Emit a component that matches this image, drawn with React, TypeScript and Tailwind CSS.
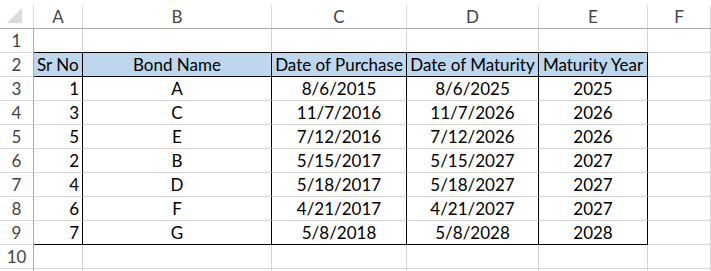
import React from "react";

const letters = ["A", "B", "C", "D", "E", "F"];

const headers = ["Sr No", "Bond Name", "Date of Purchase", "Date of Maturity", "Maturity Year"];

const bonds: (string | number)[][] = [
  [1, "A", "8/6/2015", "8/6/2025", 2025],
  [3, "C", "11/7/2016", "11/7/2026", 2026],
  [5, "E", "7/12/2016", "7/12/2026", 2026],
  [2, "B", "5/15/2017", "5/15/2027", 2027],
  [4, "D", "5/18/2017", "5/18/2027", 2027],
  [6, "F", "4/21/2017", "4/21/2027", 2027],
  [7, "G", "5/8/2018", "5/8/2028", 2028],
];

function RowHead({ n }: { n: number }) {
  return (
    <div className="flex items-end justify-center pb-[1px] border-r border-b border-r-[#ababab] border-b-[#dadada] text-[#444] leading-[20px]">
      {n}
    </div>
  );
}

function Cell({
  children,
  align = "center",
  fill = false,
  right = "gray",
  bottom = "gray",
}: {
  children?: React.ReactNode;
  align?: "left" | "center" | "right";
  fill?: boolean;
  right?: "gray" | "black";
  bottom?: "gray" | "black";
}) {
  return (
    <div
      className={[
        "flex items-end pb-[1px] leading-[20px] whitespace-nowrap overflow-visible border-r border-b text-black",
        align === "left" ? "justify-start pl-[3px]" : align === "right" ? "justify-end pr-[3px]" : "justify-center",
        fill ? "bg-[#bdd7ee]" : "bg-white",
        right === "black" ? "border-r-black" : "border-r-[#d4d4d4]",
        bottom === "black" ? "border-b-black" : "border-b-[#d4d4d4]",
      ].join(" ")}
    >
      {children}
    </div>
  );
}

export default function App() {
  return (
    <div
      className="w-[711px] h-[271px] overflow-hidden bg-white text-[17px] grid grid-cols-[34px_49px_189px_135px_132px_109px_1fr] grid-rows-[29px_repeat(10,24px)_1fr]"
      style={{ fontFamily: "Lato, 'Liberation Sans', sans-serif" }}
    >
      {/* corner */}
      <div className="flex flex-col border-b border-b-[#ababab]">
        <div className="h-[5px]" />
        <div className="flex-1 border-r border-r-[#dadada] flex items-center justify-center">
          <svg width="16" height="16" viewBox="0 0 16 16" className="ml-[-3px] mt-[-2px]">
            <polygon points="15,0 15,15 0,15" fill="#dcdcdc" />
          </svg>
        </div>
      </div>
      {letters.map((l) => (
        <div key={l} className="flex flex-col border-b border-b-[#ababab]">
          <div className="h-[5px]" />
          <div className="flex-1 border-r border-r-[#dadada] flex items-end justify-center pb-[1px] text-[#444] leading-[20px]">
            {l}
          </div>
        </div>
      ))}

      {/* row 1 */}
      <RowHead n={1} />
      {[0, 1, 2, 3, 4].map((i) => (
        <Cell key={i} bottom="black" />
      ))}
      <Cell />

      {/* row 2: headers */}
      <RowHead n={2} />
      {headers.map((h, i) => (
        <Cell key={h} align={i === 0 ? "left" : "center"} fill right="black" bottom="black">
          {h}
        </Cell>
      ))}
      <Cell />

      {/* data rows */}
      {bonds.map((row, r) => (
        <React.Fragment key={r}>
          <RowHead n={r + 3} />
          {row.map((v, i) => (
            <Cell
              key={i}
              align={i === 0 ? "right" : "center"}
              right="black"
              bottom={r === bonds.length - 1 ? "black" : "gray"}
            >
              {v}
            </Cell>
          ))}
          <Cell />
        </React.Fragment>
      ))}

      {/* row 10 */}
      <RowHead n={10} />
      {[0, 1, 2, 3, 4, 5].map((i) => (
        <Cell key={i} />
      ))}

      {/* partial row 11 */}
      <div className="border-r border-r-[#ababab]" />
      {[0, 1, 2, 3, 4, 5].map((i) => (
        <div key={i} className="border-r border-r-[#d4d4d4]" />
      ))}
    </div>
  );
}
